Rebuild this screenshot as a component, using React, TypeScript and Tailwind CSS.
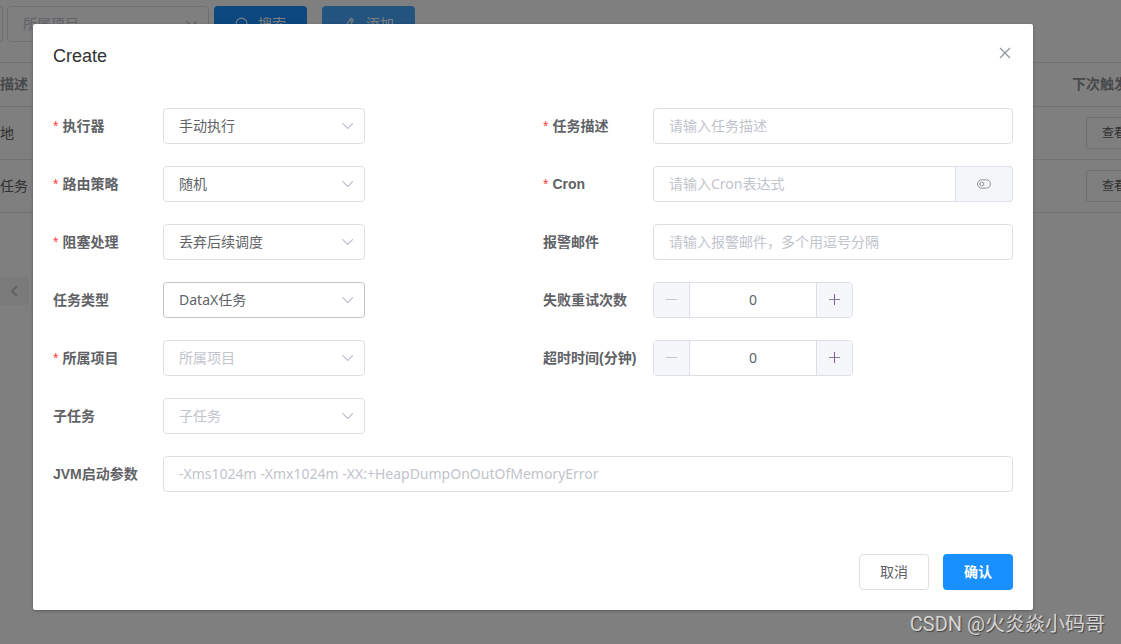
import React, { useState } from 'react';

const fieldFont = "font-['Noto_Sans','Noto_Sans_CJK_SC',sans-serif]";
const inputBase =
  'h-9 w-full min-w-0 border border-[#dcdfe6] bg-white px-[15px] pb-[2px] text-sm text-[#606266] outline-none placeholder:text-[#c0c4cc] placeholder:opacity-100';

const ChevronDown = () => (
  <svg className="h-[14px] w-[14px]" viewBox="0 0 14 14" fill="none" stroke="#c0c4cc" strokeWidth="1.1" strokeLinecap="round" strokeLinejoin="round">
    <path d="M1.8 4.5 6.7 9.5 11.6 4.5" />
  </svg>
);

type FieldProps = {
  id: string;
  label: string;
  required?: boolean;
  className?: string;
  children: React.ReactNode;
};

const Field: React.FC<FieldProps> = ({ id, label, required, className = '', children }) => (
  <div className={`flex items-center ${className}`}>
    <label htmlFor={id} className="w-[110px] shrink-0 whitespace-nowrap text-sm leading-9 font-bold text-[#606266]">
      {required && <span className="mr-1 font-normal text-[#ff4040]">*</span>}
      {label}
    </label>
    {children}
  </div>
);

type SelectProps = {
  id: string;
  options: string[];
  placeholder?: boolean;
  active?: boolean;
};

const Select: React.FC<SelectProps> = ({ id, options, placeholder, active }) => (
  <div className="relative w-[202px]">
    <select
      id={id}
      className={`h-9 w-full appearance-none rounded border bg-white pr-8 pl-[15px] text-sm outline-none ${fieldFont} ${
        active ? 'border-[#c0c4cc]' : 'border-[#dcdfe6]'
      } ${placeholder ? 'text-[#c0c4cc]' : 'text-[#606266]'}`}
    >
      {options.map((option) => (
        <option key={option}>{option}</option>
      ))}
    </select>
    <span className="pointer-events-none absolute inset-y-0 right-[10px] flex items-center">
      <ChevronDown />
    </span>
  </div>
);

const NumberInput: React.FC<{ id: string }> = ({ id }) => {
  const [value, setValue] = useState(0);

  return (
    <div className="flex h-9 w-[200px] overflow-hidden rounded border border-[#dcdfe6] bg-white">
      <button
        type="button"
        aria-label="减少"
        disabled={value === 0}
        onClick={() => setValue(value - 1)}
        className="flex w-9 shrink-0 items-center justify-center border-r border-[#dcdfe6] bg-[#f5f7fa] text-[#c0c4cc]"
      >
        <svg className="h-3 w-3" viewBox="0 0 12 12" stroke="currentColor">
          <path d="M0 5.5h11" />
        </svg>
      </button>
      <input
        id={id}
        value={value}
        onChange={(e) => setValue(Number(e.target.value) || 0)}
        className={`w-full min-w-0 text-center text-sm text-[#606266] outline-none ${fieldFont}`}
      />
      <button
        type="button"
        aria-label="增加"
        onClick={() => setValue(value + 1)}
        className="flex w-9 shrink-0 items-center justify-center border-l border-[#dcdfe6] bg-[#f5f7fa] text-[#8a8394]"
      >
        <svg className="h-3 w-3" viewBox="0 0 12 12" stroke="currentColor">
          <path d="M0 5.5h11" />
          <path d="M5.5 0v11" stroke="#8c5a9c" />
        </svg>
      </button>
    </div>
  );
};

const rows = ['地', '任务'];

const JobList = () => (
  <div className="h-screen overflow-hidden bg-white pt-[6px]">
    <div className="flex items-center">
      <div className="mr-1 h-9 w-[3px] rounded-r border border-l-0 border-[#dcdfe6]" />
      <Select id="filter-project" options={['所属项目']} placeholder />
      <button type="button" className="ml-[5px] flex h-9 w-[93px] items-center justify-center gap-[9px] rounded bg-[#1890ff] text-sm text-white">
        <svg className="h-[14px] w-[14px]" viewBox="0 0 14 14" fill="none" stroke="currentColor" strokeWidth="1.1">
          <circle cx="6.5" cy="6.5" r="5.4" />
          <path d="m10.5 10.5 3 3" />
        </svg>
        搜索
      </button>
      <button type="button" className="ml-[15px] flex h-9 w-[93px] items-center justify-center gap-[9px] rounded bg-[#46a6ff] text-sm text-white">
        <svg className="h-[14px] w-[14px]" viewBox="0 0 14 14" fill="none" stroke="currentColor" strokeWidth="1.1">
          <path d="M7.8 1.2 10.6 3 5.4 11 2.4 12.2 2.6 9.2ZM6.6 3 9.4 4.8M1 13.5h12" />
        </svg>
        添加
      </button>
    </div>

    <table className="mt-5 w-[calc(100%+53px)] table-fixed border-collapse text-sm text-[#606266]">
      <thead>
        <tr className="h-11 border-y border-[#dfe6ec] text-[#909399]">
          <th className="p-0 pb-[2px] text-left">描述</th>
          <th className="w-[120px] p-0 pb-[2px] text-center whitespace-nowrap">下次触发时间</th>
        </tr>
      </thead>
      <tbody>
        {rows.map((row) => (
          <tr key={row} className="h-[53px] border-b border-[#dfe6ec]">
            <td className="p-0">{row}</td>
            <td className="p-0 text-center">
              <button type="button" className="h-8 w-14 rounded-[3px] border border-[#dcdfe6] align-middle text-xs">
                查看
              </button>
            </td>
          </tr>
        ))}
      </tbody>
    </table>

    <button type="button" aria-label="上一页" className="mt-16 flex h-7 w-[29px] items-center justify-center rounded-[2px] bg-[#f4f4f5] text-[#c0c4cc]">
      <svg className="h-3 w-3" viewBox="0 0 12 12" fill="none" stroke="currentColor" strokeWidth="2">
        <path d="M8 1 3 6l5 5" />
      </svg>
    </button>
  </div>
);

const CreateDialog = () => (
  <div role="dialog" aria-labelledby="dialog-title" className="min-w-0 flex-1 rounded-[2px] bg-white p-5 shadow-[0_1px_3px_rgba(0,0,0,0.3)]">
    <header className="flex items-start justify-between">
      <h2 id="dialog-title" className="text-lg leading-6 text-[#303133]">
        Create
      </h2>
      <button type="button" aria-label="关闭" className="flex h-[18px] w-4 items-center justify-center text-[#909399]">
        <svg className="h-4 w-4" viewBox="0 0 16 16" stroke="currentColor" strokeWidth="1.2">
          <path d="m3 3 10 10M13 3 3 13" />
        </svg>
      </button>
    </header>

    <form className="mt-10 grid grid-cols-2 gap-x-5 gap-y-[22px]">
      <Field id="executor" label="执行器" required>
        <Select id="executor" options={['手动执行']} />
      </Field>
      <Field id="desc" label="任务描述" required>
        <input id="desc" placeholder="请输入任务描述" className={`rounded ${inputBase} ${fieldFont}`} />
      </Field>

      <Field id="route" label="路由策略" required>
        <Select id="route" options={['随机']} />
      </Field>
      <Field id="cron" label="Cron" required>
        <div className="flex min-w-0 flex-1">
          <input id="cron" placeholder="请输入Cron表达式" className={`rounded-l ${inputBase} ${fieldFont}`} />
          <button
            type="button"
            aria-label="Cron"
            className="flex h-9 w-[57px] shrink-0 items-center justify-center rounded-r border border-l-0 border-[#dcdfe6] bg-[#f5f7fa] text-[#909399]"
          >
            <svg className="h-[14px] w-[14px]" viewBox="0 0 14 14" fill="none" stroke="currentColor">
              <rect x="0.5" y="2.8" width="13" height="8.4" rx="4.2" />
              <circle cx="4.8" cy="7" r="2" />
            </svg>
          </button>
        </div>
      </Field>

      <Field id="block" label="阻塞处理" required>
        <Select id="block" options={['丢弃后续调度']} />
      </Field>
      <Field id="email" label="报警邮件">
        <input id="email" placeholder="请输入报警邮件，多个用逗号分隔" className={`rounded ${inputBase} ${fieldFont}`} />
      </Field>

      <Field id="type" label="任务类型">
        <Select id="type" options={['DataX任务']} active />
      </Field>
      <Field id="retry" label="失败重试次数">
        <NumberInput id="retry" />
      </Field>

      <Field id="project" label="所属项目" required>
        <Select id="project" options={['所属项目']} placeholder />
      </Field>
      <Field id="timeout" label="超时时间(分钟)">
        <NumberInput id="timeout" />
      </Field>

      <Field id="child" label="子任务" className="col-span-2">
        <Select id="child" options={['子任务']} placeholder />
      </Field>

      <Field id="jvm" label="JVM启动参数" className="col-span-2">
        <input
          id="jvm"
          placeholder="-Xms1024m -Xmx1024m -XX:+HeapDumpOnOutOfMemoryError"
          className={`rounded ${inputBase} ${fieldFont}`}
        />
      </Field>
    </form>

    <footer className="mt-[62px] flex justify-end gap-[14px]">
      <button type="button" className="h-9 w-[70px] rounded border border-[#dcdfe6] bg-white text-sm text-[#606266]">
        取消
      </button>
      <button type="button" className="h-9 w-[70px] rounded bg-[#1890ff] text-sm font-bold text-white">
        确认
      </button>
    </footer>
  </div>
);

export default function App() {
  return (
    <div className="relative h-screen overflow-hidden font-['Liberation_Sans','Noto_Sans_CJK_SC',sans-serif]">
      <JobList />
      <div className="absolute inset-0 flex items-start bg-black/50 pt-6 pr-[88px] pl-[33px]">
        <CreateDialog />
      </div>
      <p className="absolute right-4 bottom-1 font-['Roboto','Noto_Sans_CJK_SC',sans-serif] text-xl leading-8 text-[#d4d4d4] [text-shadow:1px_1px_1px_#444]">
        CSDN @火炎焱小码哥
      </p>
    </div>
  );
}
